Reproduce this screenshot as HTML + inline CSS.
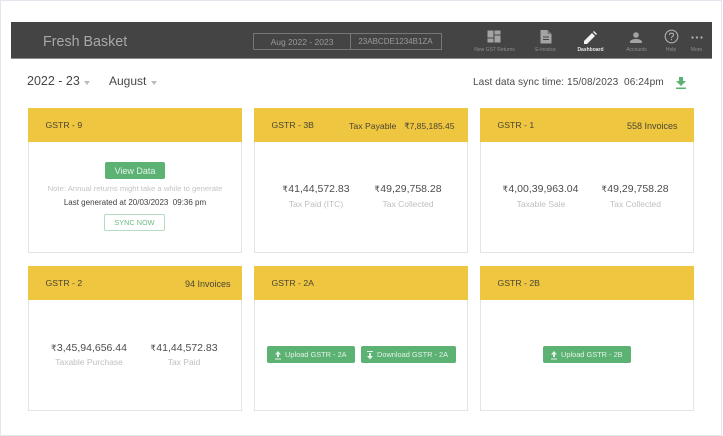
<!DOCTYPE html>
<html>
<head>
<meta charset="utf-8">
<style>
html,body{margin:0;padding:0;background:#fff}
body{width:723px;height:436px;position:relative;overflow:hidden;font-family:"Liberation Sans","DejaVu Sans",sans-serif;color:#444}
.a{position:absolute;white-space:nowrap}
.frame{left:0;top:0;width:720px;height:434px;border:1px solid #e4e6ee}
.hdr{left:11px;top:22px;width:701px;height:36px;background:#444;border-bottom:1px solid #8a8a8a}
.nav{top:47px;font-size:5px;line-height:7px;color:#8e8e8e;transform:translateX(-50%)}
.card{width:212px;height:144px;background:#fff;border:1px solid #e4e4e4;border-top:0;box-sizing:content-box}
.head{position:absolute;left:-1px;top:0;width:214px;height:34px;background:#efc63f}
.title{position:absolute;left:17.500px;top:0;line-height:35px;font-size:8.700px;color:#4a4536}
.right{position:absolute;right:13.500px;top:0;line-height:36px;font-size:8.700px;color:#4a4536}
.inv{font-size:9px}
.r{font-size:8.500px;margin-left:3px}
.amt{font-size:10.500px;line-height:14px;color:#4d4d4d;transform:translateX(-50%)}
.amt i{font-style:normal;font-size:8.500px;margin-right:.5px}
.lbl{font-size:8.500px;line-height:12px;color:#bfbfbf;transform:translateX(-50%)}
.btn{background:#5bb273;color:#e4f2e8;font-size:7.400px;border-radius:2px;height:17px;line-height:18px;box-sizing:border-box}
</style>
</head>
<body>
<div class="a frame"></div>
<div class="a hdr"></div>
<div class="a" style="left:43px;top:32.500px;font-size:14.300px;line-height:18px;color:#a8a8a8">Fresh Basket</div>
<div class="a" style="left:253px;top:33px;width:96px;height:15px;border:1px solid #777;border-radius:1px;font-size:8.500px;line-height:16px;text-align:center;color:#9a9a9a">Aug 2022 - 2023</div>
<div class="a" style="left:350px;top:33px;width:91px;height:15px;border:1px solid #777;border-left:0;font-size:8px;line-height:16px;text-align:center;color:#9a9a9a">23ABCDE1234B1ZA</div>

<svg class="a" style="left:487px;top:30px" width="14" height="13" viewBox="0 0 14 13"><g fill="#a3a3a3"><rect x="0.500" y="0.500" width="6" height="7"/><rect x="7.500" y="0.500" width="6" height="4"/><rect x="0.500" y="8.500" width="6" height="4"/><rect x="7.500" y="5.500" width="6" height="7"/></g></svg>
<div class="a nav" style="left:494.500px">New GST Returns</div>
<svg class="a" style="left:540px;top:30px" width="12" height="14" viewBox="0 0 12 14"><path d="M1 0H7.500L11.500 4V13.500H.5V0Z" fill="#a3a3a3"/><path d="M3 7H9M3 9.500H9" stroke="#444" stroke-width="1.100"/><path d="M7.500 0V4H11.500" fill="#777"/></svg>
<div class="a nav" style="left:545.500px">E-invoice</div>
<svg class="a" style="left:584px;top:31px" width="13" height="13" viewBox="0 0 13 13"><path d="M0 13V10L8 2L11 5L3 13Z" fill="#f2f2f2"/><path d="M9 1L10 0L13 3L12 4Z" fill="#f2f2f2"/></svg>
<div class="a nav" style="left:590.500px;color:#e6e6e6;font-weight:bold">Dashboard</div>
<svg class="a" style="left:630px;top:32px" width="12" height="12" viewBox="0 0 12 12"><circle cx="6" cy="3" r="2.800" fill="#a3a3a3"/><path d="M0 11V10C0 8 3 7 6 7S12 8 12 10V11Z" fill="#a3a3a3"/></svg>
<div class="a nav" style="left:636.500px">Accounts</div>
<svg class="a" style="left:664px;top:29px" width="15" height="15" viewBox="0 0 15 15"><circle cx="7.500" cy="7.500" r="6.300" fill="none" stroke="#b0b0b0" stroke-width="1.100"/><path d="M5.400 5.900C5.400 3.600 9.600 3.600 9.600 5.900C9.600 7.400 7.500 7.300 7.500 9.100" fill="none" stroke="#b0b0b0" stroke-width="1.100"/><rect x="7" y="10" width="1" height="1.200" fill="#b0b0b0"/></svg>
<div class="a nav" style="left:671px">Help</div>
<svg class="a" style="left:691px;top:36px" width="12" height="3" viewBox="0 0 12 3"><circle cx="1.500" cy="1.500" r="1.100" fill="#b5b5b5"/><circle cx="6" cy="1.500" r="1.100" fill="#b5b5b5"/><circle cx="10.500" cy="1.500" r="1.100" fill="#b5b5b5"/></svg>
<div class="a nav" style="left:696.500px">More</div>

<div class="a" style="left:27px;top:73px;font-size:12.500px;line-height:17px;color:#474747">2022 - 23</div>
<div class="a" style="left:84px;top:81px;width:0;height:0;border:3.500px solid transparent;border-top:4px solid #bbb"></div>
<div class="a" style="left:109px;top:73px;font-size:12px;line-height:17px;color:#474747">August</div>
<div class="a" style="left:151px;top:81px;width:0;height:0;border:3.500px solid transparent;border-top:4px solid #bbb"></div>
<div class="a" style="left:473px;top:76px;font-size:10.100px;line-height:14px;color:#4a4a4a;letter-spacing:.07px">Last data sync time: 15/08/2023&nbsp; 06:24pm</div>
<svg class="a" style="left:675px;top:76px" width="12" height="14" viewBox="0 0 12 14"><path d="M4 1H8V5H11L6 10L1 5H4Z" fill="#5bb273"/><rect x="1" y="11.500" width="10" height="1.500" fill="#5bb273"/></svg>

<!-- GSTR-9 -->
<div class="a card" style="left:28px;top:108px"><div class="head"><span class="title">GSTR - 9</span></div></div>
<div class="a btn" style="left:105px;top:162px;width:60px;font-size:9px;text-align:center">View Data</div>
<div class="a" style="left:135px;top:183px;transform:translateX(-50%);font-size:7.700px;line-height:11px;color:#c4c4c4">Note: Annual returns might take a while to generate</div>
<div class="a" style="left:135px;top:197px;transform:translateX(-50%);font-size:8px;line-height:12px;color:#3f3f3f">Last generated at 20/03/2023&nbsp; 09:36 pm</div>
<div class="a" style="left:104px;top:214px;width:59px;height:15px;border:1px solid #b5dcc0;border-radius:2px;text-align:center;font-size:7.300px;line-height:16px;color:#6dbb83">SYNC NOW</div>

<!-- GSTR-3B -->
<div class="a card" style="left:254px;top:108px"><div class="head"><span class="title">GSTR - 3B</span><span class="right">Tax Payable &nbsp;<span class="r">₹7,85,185.45</span></span></div></div>
<div class="a amt" style="left:316px;top:182px"><i>₹</i>41,44,572.83</div>
<div class="a lbl" style="left:316px;top:197.500px">Tax Paid (ITC)</div>
<div class="a amt" style="left:408px;top:182px"><i>₹</i>49,29,758.28</div>
<div class="a lbl" style="left:408px;top:197.500px">Tax Collected</div>

<!-- GSTR-1 -->
<div class="a card" style="left:480px;top:108px"><div class="head"><span class="title">GSTR - 1</span><span class="right inv" style="right:16.500px">558 Invoices</span></div></div>
<div class="a amt" style="left:540.500px;top:182px"><i>₹</i>4,00,39,963.04</div>
<div class="a lbl" style="left:541px;top:197.500px">Taxable Sale</div>
<div class="a amt" style="left:635px;top:182px"><i>₹</i>49,29,758.28</div>
<div class="a lbl" style="left:635.500px;top:197.500px">Tax Collected</div>

<!-- GSTR-2 -->
<div class="a card" style="left:28px;top:266px"><div class="head"><span class="title">GSTR - 2</span><span class="right inv" style="right:11.500px">94 Invoices</span></div></div>
<div class="a amt" style="left:89px;top:341px"><i>₹</i>3,45,94,656.44</div>
<div class="a lbl" style="left:89px;top:355.500px">Taxable Purchase</div>
<div class="a amt" style="left:184px;top:341px"><i>₹</i>41,44,572.83</div>
<div class="a lbl" style="left:184px;top:355.500px">Tax Paid</div>

<!-- GSTR-2A -->
<div class="a card" style="left:254px;top:266px"><div class="head"><span class="title">GSTR - 2A</span></div></div>
<div class="a btn" style="left:267px;top:346px;width:88px;padding-left:18px">Upload GSTR - 2A</div>
<svg class="a" style="left:274px;top:351px" width="8" height="9" viewBox="0 0 8 9"><path d="M4 0L7 3.500H5V6H3V3.500H1Z" fill="#e4f2e8"/><rect x="1" y="7.500" width="6" height="1" fill="#e4f2e8"/></svg>
<div class="a btn" style="left:361px;top:346px;width:95px;padding-left:16px">Download GSTR - 2A</div>
<svg class="a" style="left:366px;top:351px" width="8" height="9" viewBox="0 0 8 9"><rect x="1" y="0" width="6" height="1" fill="#e4f2e8"/><path d="M4 8.500L7 5H5V2H3V5H1Z" fill="#e4f2e8"/></svg>

<!-- GSTR-2B -->
<div class="a card" style="left:480px;top:266px"><div class="head"><span class="title">GSTR - 2B</span></div></div>
<div class="a btn" style="left:543px;top:346px;width:88px;padding-left:18px">Upload GSTR - 2B</div>
<svg class="a" style="left:550px;top:351px" width="8" height="9" viewBox="0 0 8 9"><path d="M4 0L7 3.500H5V6H3V3.500H1Z" fill="#e4f2e8"/><rect x="1" y="7.500" width="6" height="1" fill="#e4f2e8"/></svg>
</body>
</html>
